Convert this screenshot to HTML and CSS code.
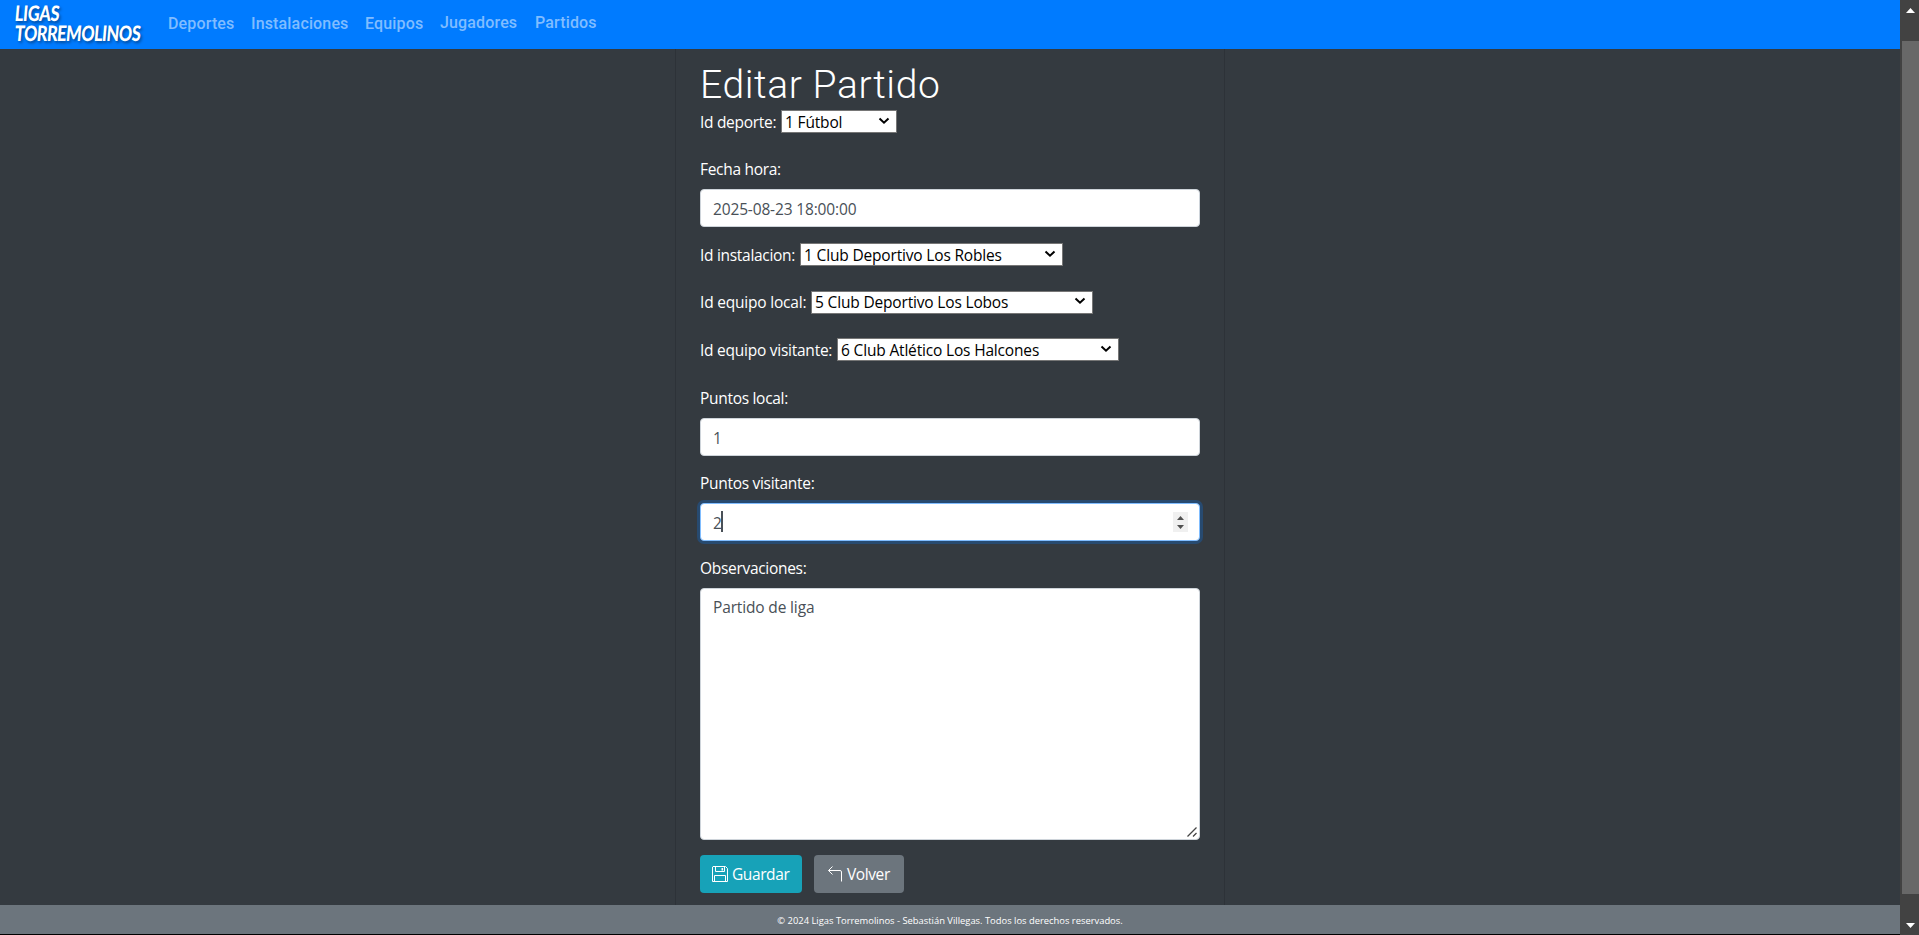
FILE: index.html
```
<!DOCTYPE html>
<html lang="es">
<head>
<meta charset="utf-8">
<title>Editar Partido</title>
<link rel="stylesheet" href="styles.css">
</head>
<body>
<div class="page">
  <header class="navbar">
    <a class="brand"><span class="brand-top">LIGAS</span><span class="brand-bottom">TORREMOLINOS</span></a>
    <nav class="nav">
      <a class="w-dep">Deportes</a><a class="w-ins">Instalaciones</a><a class="w-equ">Equipos</a><a class="w-jug raised">Jugadores</a><a class="raised">Partidos</a>
    </nav>
  </header>
  <main class="main">
    <form class="card">
      <h1 class="title">Editar Partido</h1>
      <div class="row row-first"><label>Id deporte:</label><div class="select s-dep"><span>1 Fútbol</span><svg class="chev" viewBox="0 0 12 8"><path d="M1.5 1.5 6 5.7 10.5 1.5"/></svg></div></div>
      <label class="label">Fecha hora:</label>
      <div class="input"><span class="date">2025-08-23 18:00:00</span></div>
      <div class="row"><label class="l-ins">Id instalacion:</label><div class="select s-ins"><span>1 Club Deportivo Los Robles</span><svg class="chev" viewBox="0 0 12 8"><path d="M1.5 1.5 6 5.7 10.5 1.5"/></svg></div></div>
      <div class="row"><label class="l-loc">Id equipo local:</label><div class="select s-loc"><span>5 Club Deportivo Los Lobos</span><svg class="chev" viewBox="0 0 12 8"><path d="M1.5 1.5 6 5.7 10.5 1.5"/></svg></div></div>
      <div class="row row-last"><label class="l-vis">Id equipo visitante:</label><div class="select s-vis"><span>6 Club Atlético Los Halcones</span><svg class="chev" viewBox="0 0 12 8"><path d="M1.5 1.5 6 5.7 10.5 1.5"/></svg></div></div>
      <label class="label">Puntos local:</label>
      <div class="input"><span>1</span></div>
      <label class="label">Puntos visitante:</label>
      <div class="input focused"><span>2</span><i class="caret"></i>
        <svg class="spin" viewBox="0 0 15 20"><path d="M4 8 7.5 4 11 8zM4 13 7.5 17 11 13z"/></svg></div>
      <label class="label">Observaciones:</label>
      <div class="textarea"><span>Partido de liga</span><svg class="grip" viewBox="0 0 12 12"><path d="M1.5 10.5 10.5 1.5M7 10.5 10.5 7"/></svg></div>
      <div class="actions">
        <a class="btn save"><svg class="icon" viewBox="0 0 16 16"><path d="M1 .5h12.5l2 2v13H.5V1zM3.5.5v5h9v-5M2.500 15.500V9.500h11v6"/><path class="solid" d="M9.500 2h1.600v2.500H9.500z"/></svg>Guardar</a>
        <a class="btn back"><svg class="icon" viewBox="0 0 16 16"><path d="M14.500 15.500V6q0-1.500-1.500-1.500H1.500M5.500 .5 1.500 4.500 5.500 8.500"/></svg>Volver</a>
      </div>
    </form>
  </main>
  <footer class="footer">© 2024 Ligas Torremolinos - Sebastián Villegas. Todos los derechos reservados.</footer>
</div>
<aside class="scroll">
  <svg class="arrow" viewBox="0 0 9 5"><path d="M0 5 4.500 0 9 5z"/></svg>
  <div class="thumb"></div>
  <svg class="arrow" viewBox="0 0 9 5"><path d="M0 0 4.500 5 9 0z"/></svg>
</aside>
</body>
</html>
```
FILE: styles.css
```
* { box-sizing: border-box; }
body {
  margin: 0;
  height: 935px;
  display: flex;
  overflow: hidden;
  background: #343a40;
  color: #fff;
  font: 15.5px/24px "Open Sans", sans-serif;
  letter-spacing: -0.3px;
  white-space: nowrap;
}
.page { width: 1900px; height: 935px; display: flex; flex-direction: column; border-bottom: 1px solid #000; }
.navbar { height: 49px; flex: none; display: flex; background: #007bff; padding-left: 15px; }
.brand {
  width: 153px;
  display: flex;
  flex-direction: column;
  align-items: flex-start;
  padding-top: 3px;
  font: 900 19px/20px Lato, sans-serif;
  text-shadow: 2px 2px 3px rgba(0, 0, 0, .4);
}
.brand span { transform-origin: 0 50%; }
.brand-top { letter-spacing: -.3px; transform: skewX(-5deg) scale(.86, 1.12); }
.brand-bottom { letter-spacing: -.5px; transform: skewX(-5deg) scale(.86, 1.12); }
.nav { display: flex; padding-top: 12px; color: #80bdff; font: 500 16px/24px Roboto, sans-serif; letter-spacing: .15px; }
.w-dep { width: 83px; }
.w-ins { width: 114px; }
.w-equ { width: 75px; }
.w-jug { width: 95px; }
.raised { margin-top: -1px; }
.main { height: 856px; flex: none; display: flex; justify-content: center; }
.card { width: 550px; border: 1px solid #2d3238; border-width: 0 1px; padding: 12px 24px 0; }
.title { margin: 0 0 1px; font: 300 39px/48px Roboto, sans-serif; letter-spacing: .6px; }
.row { display: flex; height: 23px; margin: 16px 0 24.500px; align-items: center; }
.row + .row { margin-top: 0; }
.row-first { margin: 0 0 24px; }
.row-last { margin-bottom: 24.500px; }
.row label { flex: none; width: 81px; }
.row .l-ins { width: 100px; }
.row .l-loc { width: 111px; letter-spacing: -.2px; }
.row .l-vis { width: 137px; letter-spacing: -.25px; }
.select {
  height: 23px;
  display: flex;
  align-items: center;
  justify-content: space-between;
  padding: 0 6px 0 3px;
  background: #fff;
  border: 1px solid #767676;
  color: #000;
  letter-spacing: -.17px;
}
.s-dep { width: 116px; }
.s-ins { width: 263px; }
.s-loc { width: 282px; }
.s-vis { width: 282px; }
.chev { width: 12px; height: 8px; fill: none; stroke: #000; stroke-width: 2; margin-top: -2px; }
.label { display: block; height: 24px; margin-bottom: 8px; }
.input {
  height: 38px;
  display: flex;
  align-items: center;
  margin-bottom: 15.300px;
  padding: 0 11px 0 12px;
  background: #fff;
  border: 1px solid #ced4da;
  border-radius: 4px;
  color: #495057;
}
.input span { padding-top: 2px; }
.date { letter-spacing: -.15px; }
.focused { border-color: #80bdff; box-shadow: 0 0 0 3px rgba(0, 123, 255, .25); }
.caret { width: 2px; height: 21px; margin-left: -1px; background: #495057; }
.spin { width: 15px; height: 20px; margin-left: auto; background: #f0f0f0; fill: #505050; }
.textarea {
  height: 252px;
  display: flex;
  justify-content: space-between;
  padding: 6px 0 0 12px;
  background: #fff;
  border: 1px solid #ced4da;
  border-radius: 4px;
  color: #495057;
  letter-spacing: -.15px;
}
.grip { width: 12px; height: 12px; align-self: flex-end; margin: 0 1px 1px; fill: none; stroke: #444; stroke-width: 1.3; }
.actions { display: flex; gap: 12px; margin-top: 15px; }
.btn { height: 38px; display: flex; align-items: center; gap: 4px; padding-left: 12px; border-radius: 4px; letter-spacing: -.4px; }
.save { width: 102px; background: #17a2b8; }
.back { width: 90px; background: #6c757d; padding-left: 13px; }
.icon { width: 16px; height: 16px; fill: none; stroke: #fff; stroke-width: 1; }
.icon .solid { fill: #fff; stroke: none; }
.footer { height: 29px; flex: none; background: #6c757d; text-align: center; font-size: 9.4px; line-height: 31px; letter-spacing: 0; }
.scroll { width: 19px; height: 935px; background: #424242; display: flex; flex-direction: column; align-items: flex-end; padding: 8px 0 7px; }
.arrow { width: 9px; height: 5px; fill: #fff; margin-right: 4px; flex: none; }
.thumb { width: 17px; height: 853px; background: #686868; margin: 28px 0 auto; flex: none; }
```
